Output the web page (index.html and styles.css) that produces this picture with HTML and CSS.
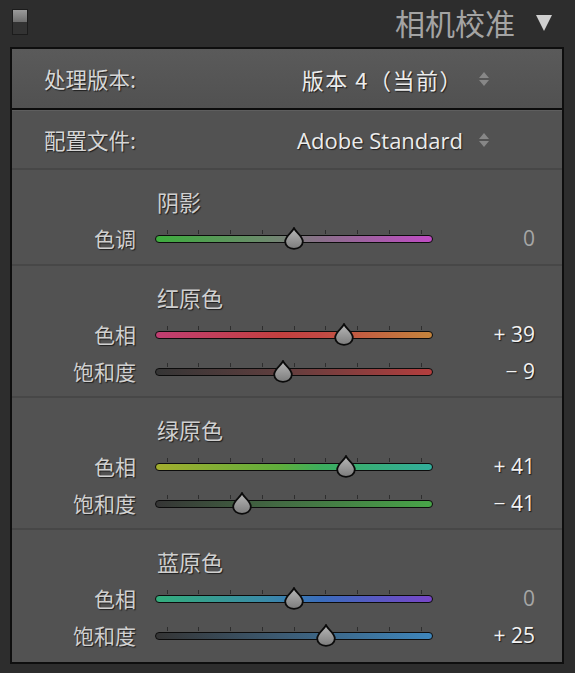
FILE: index.html
```html
<!DOCTYPE html>
<html lang="zh">
<head>
<meta charset="utf-8">
<link rel="stylesheet" href="styles.css">
</head>
<body>
<div class="header">
  <div class="toggle"><span class="toggle-on"></span></div>
  <div class="title">相机校准</div>
  <svg class="collapse" width="18" height="18" viewBox="0 0 18 18"><path d="M1 1 H17 L9 17 Z" fill="#cfcfcf"/></svg>
</div>
<div class="panel">
  <div class="select-row version">
    <span class="select-label">处理版本:</span>
    <span class="select-value">版本 4（当前）</span>
    <svg class="stepper" width="12" height="16" viewBox="0 0 12 16"><path d="M6 1 L11 7 H1 Z M1 9 H11 L6 15 Z" fill="#878787"/></svg>
  </div>
  <div class="select-row profile">
    <span class="select-label">配置文件:</span>
    <span class="select-value">Adobe Standard</span>
    <svg class="stepper" width="12" height="16" viewBox="0 0 12 16"><path d="M6 1 L11 7 H1 Z M1 9 H11 L6 15 Z" fill="#878787"/></svg>
  </div>

  <div class="section first">
    <div class="section-title">阴影</div>
    <div class="slider-row">
      <span class="label">色调</span>
      <div class="slider">
        <div class="ticks"><i></i><i></i><i></i><i></i><i></i><i></i><i></i><i></i><i></i></div>
        <div class="track t-shadow"></div>
        <svg class="thumb" style="left:129px" width="20" height="23" viewBox="0 0 20 23"><defs><linearGradient id="g1" x1="0" y1="0" x2="0" y2="1"><stop offset="0" stop-color="#b8b8b8"/><stop offset="1" stop-color="#7c7c7c"/></linearGradient></defs><path d="M10 1.2 C11.5 5 18.8 9 18.8 14.5 C18.8 19 14.8 21.8 10 21.8 C5.2 21.8 1.2 19 1.2 14.5 C1.2 9 8.5 5 10 1.2 Z" fill="url(#g1)" stroke="#0b0b0b" stroke-width="1.8"/></svg>
      </div>
      <span class="value zero">0</span>
    </div>
  </div>

  <div class="section">
    <div class="section-title">红原色</div>
    <div class="slider-row">
      <span class="label">色相</span>
      <div class="slider">
        <div class="ticks"><i></i><i></i><i></i><i></i><i></i><i></i><i></i><i></i><i></i></div>
        <div class="track t-red-hue"></div>
        <svg class="thumb" style="left:178.5px" width="20" height="23" viewBox="0 0 20 23"><path d="M10 1.2 C11.5 5 18.8 9 18.8 14.5 C18.8 19 14.8 21.8 10 21.8 C5.2 21.8 1.2 19 1.2 14.5 C1.2 9 8.5 5 10 1.2 Z" fill="url(#g1)" stroke="#0b0b0b" stroke-width="1.8"/></svg>
      </div>
      <span class="value">+ 39</span>
    </div>
    <div class="slider-row">
      <span class="label">饱和度</span>
      <div class="slider">
        <div class="ticks"><i></i><i></i><i></i><i></i><i></i><i></i><i></i><i></i><i></i></div>
        <div class="track t-red-sat"></div>
        <svg class="thumb" style="left:117.6px" width="20" height="23" viewBox="0 0 20 23"><path d="M10 1.2 C11.5 5 18.8 9 18.8 14.5 C18.8 19 14.8 21.8 10 21.8 C5.2 21.8 1.2 19 1.2 14.5 C1.2 9 8.5 5 10 1.2 Z" fill="url(#g1)" stroke="#0b0b0b" stroke-width="1.8"/></svg>
      </div>
      <span class="value">− 9</span>
    </div>
  </div>

  <div class="section">
    <div class="section-title">绿原色</div>
    <div class="slider-row">
      <span class="label">色相</span>
      <div class="slider">
        <div class="ticks"><i></i><i></i><i></i><i></i><i></i><i></i><i></i><i></i><i></i></div>
        <div class="track t-green-hue"></div>
        <svg class="thumb" style="left:181.1px" width="20" height="23" viewBox="0 0 20 23"><path d="M10 1.2 C11.5 5 18.8 9 18.8 14.5 C18.8 19 14.8 21.8 10 21.8 C5.2 21.8 1.2 19 1.2 14.5 C1.2 9 8.5 5 10 1.2 Z" fill="url(#g1)" stroke="#0b0b0b" stroke-width="1.8"/></svg>
      </div>
      <span class="value">+ 41</span>
    </div>
    <div class="slider-row">
      <span class="label">饱和度</span>
      <div class="slider">
        <div class="ticks"><i></i><i></i><i></i><i></i><i></i><i></i><i></i><i></i><i></i></div>
        <div class="track t-green-sat"></div>
        <svg class="thumb" style="left:76.9px" width="20" height="23" viewBox="0 0 20 23"><path d="M10 1.2 C11.5 5 18.8 9 18.8 14.5 C18.8 19 14.8 21.8 10 21.8 C5.2 21.8 1.2 19 1.2 14.5 C1.2 9 8.5 5 10 1.2 Z" fill="url(#g1)" stroke="#0b0b0b" stroke-width="1.8"/></svg>
      </div>
      <span class="value">− 41</span>
    </div>
  </div>

  <div class="section last">
    <div class="section-title">蓝原色</div>
    <div class="slider-row">
      <span class="label">色相</span>
      <div class="slider">
        <div class="ticks"><i></i><i></i><i></i><i></i><i></i><i></i><i></i><i></i><i></i></div>
        <div class="track t-blue-hue"></div>
        <svg class="thumb" style="left:129px" width="20" height="23" viewBox="0 0 20 23"><path d="M10 1.2 C11.5 5 18.8 9 18.8 14.5 C18.8 19 14.8 21.8 10 21.8 C5.2 21.8 1.2 19 1.2 14.5 C1.2 9 8.5 5 10 1.2 Z" fill="url(#g1)" stroke="#0b0b0b" stroke-width="1.8"/></svg>
      </div>
      <span class="value zero">0</span>
    </div>
    <div class="slider-row">
      <span class="label">饱和度</span>
      <div class="slider">
        <div class="ticks"><i></i><i></i><i></i><i></i><i></i><i></i><i></i><i></i><i></i></div>
        <div class="track t-blue-sat"></div>
        <svg class="thumb" style="left:160.75px" width="20" height="23" viewBox="0 0 20 23"><path d="M10 1.2 C11.5 5 18.8 9 18.8 14.5 C18.8 19 14.8 21.8 10 21.8 C5.2 21.8 1.2 19 1.2 14.5 C1.2 9 8.5 5 10 1.2 Z" fill="url(#g1)" stroke="#0b0b0b" stroke-width="1.8"/></svg>
      </div>
      <span class="value">+ 25</span>
    </div>
  </div>
</div>
</body>
</html>
```

FILE: styles.css
```css
* { box-sizing: border-box; }
html, body { margin: 0; padding: 0; }
body {
  width: 575px;
  height: 673px;
  background: #2d2d2d;
  font-family: "Open Sans", "Noto Sans CJK SC", sans-serif;
  overflow: hidden;
}

.header {
  height: 47px;
  display: flex;
  align-items: center;
  padding: 0 22px 0 12px;
}
.toggle {
  width: 16px;
  height: 26px;
  margin-top: -4px;
  background: #333;
  border: 1px solid #1c1c1c;
  display: flex;
  flex-direction: column;
}
.toggle-on {
  height: 12px;
  background: linear-gradient(#9a9a9a, #6e6e6e);
}
.title {
  margin-left: auto;
  font-family: "Noto Sans CJK SC", sans-serif;
  font-size: 30px;
  line-height: 36px;
  color: #a4a4a4;
  margin-top: -4px;
}
.collapse { margin-left: 20px; margin-top: -2px; }

.panel {
  margin-left: 10px;
  width: 554px;
  height: 617px;
  border: 2px solid #0e0e0e;
  background: #525252;
}

.select-row {
  display: flex;
  align-items: center;
  padding: 0 72px 0 32px;
  font-size: 21px;
  color: #d6d6d6;
  text-shadow: 1px 1px 1px #1e1e1e;
}
.version {
  height: 61px;
  background: linear-gradient(#5a5a5a, #515151);
  border-bottom: 2px solid #0c0c0c;
}
.profile {
  height: 60px;
  border-top: 1px solid #5e5e5e;
  border-bottom: 2px solid #474747;
}
.select-label {
  font-family: "Noto Sans CJK SC", sans-serif;
  font-size: 21.5px;
}
.select-value {
  margin-left: auto;
  font-family: "Open Sans", "Noto Sans CJK SC", sans-serif;
  font-size: 22px;
  color: #ececec;
}
.version .select-value {
  font-family: "Noto Sans CJK SC", sans-serif;
  letter-spacing: 1.5px;
}
.stepper { margin-left: 15px; }

.section {
  padding: 19px 0 7px;
  border-bottom: 2px solid #474747;
}
.section.first { padding-bottom: 8px; }
.section.last { border-bottom: none; }
.section-title {
  padding-left: 145px;
  font-family: "Noto Sans CJK SC", sans-serif;
  font-size: 22px;
  line-height: 24px;
  height: 24px;
  margin-bottom: 6px;
  color: #cfcfcf;
  text-shadow: 1px 1px 1px #1e1e1e;
}
.slider-row {
  display: flex;
  align-items: center;
  height: 37px;
}
.label {
  width: 124px;
  margin-right: 19px;
  text-align: right;
  font-family: "Noto Sans CJK SC", sans-serif;
  font-size: 21px;
  color: #d0d0d0;
  text-shadow: 1px 1px 1px #1e1e1e;
}
.slider {
  position: relative;
  width: 278px;
  height: 24px;
  padding-top: 3px;
}
.ticks {
  display: flex;
  justify-content: space-between;
  padding: 0 11.5px;
  height: 5px;
  margin-bottom: 1px;
}
.ticks i {
  display: block;
  width: 1px;
  height: 4px;
  margin-top: 1px;
  background: #2e2e2e;
}
.track {
  height: 8px;
  border: 1.5px solid #0c0c0c;
  border-radius: 4px;
}
.thumb {
  position: absolute;
  top: 1px;
}
.t-shadow { background: linear-gradient(90deg, #3dad3d, #6c8a6c 40%, #8a6e8a 60%, #c04cc4); }
.t-red-hue { background: linear-gradient(90deg, #c03e72, #c3403f 45%, #c24944 60%, #c4843c); }
.t-red-sat { background: linear-gradient(90deg, #353535, #5f3e3e 45%, #b43e3e); }
.t-green-hue { background: linear-gradient(90deg, #a3ae2e, #5fae3c 45%, #3cae5e 60%, #32ae9c); }
.t-green-sat { background: linear-gradient(90deg, #353535, #436b43 45%, #48a548); }
.t-blue-hue { background: linear-gradient(90deg, #33ae7c, #3a8aa8 40%, #3a6cbc 60%, #7846c8); }
.t-blue-sat { background: linear-gradient(90deg, #353535, #3c5a72 45%, #3e86bc); }

.value {
  width: 102px;
  text-align: right;
  font-family: "Open Sans", sans-serif;
  font-size: 21px;
  color: #f2f2f2;
  text-shadow: 1px 1px 1px #1a1a1a;
}
.value.zero {
  color: #a6a6a6;
  text-shadow: none;
}
```
